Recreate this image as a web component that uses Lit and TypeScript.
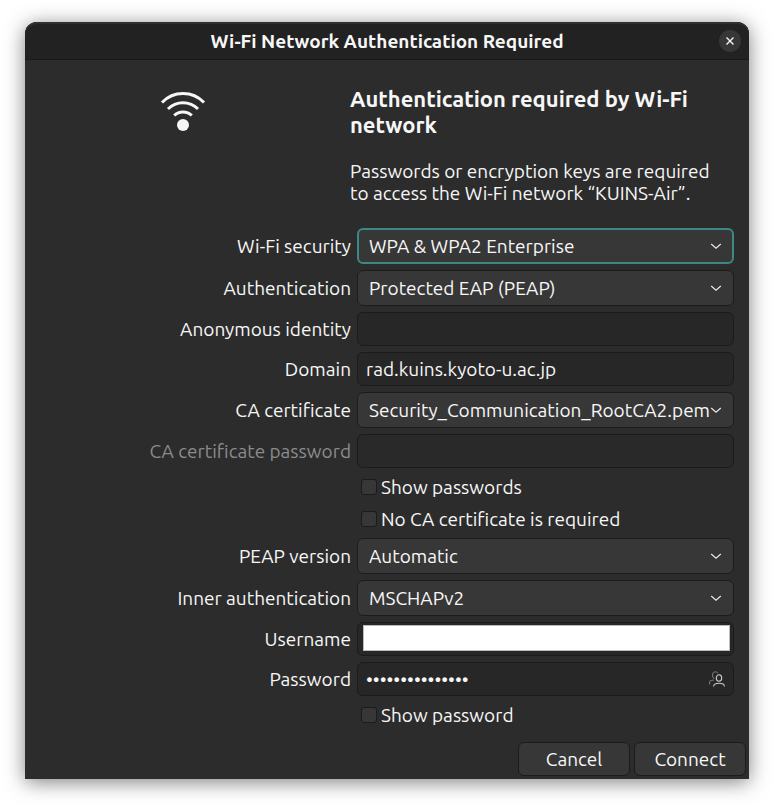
import { LitElement, html, css, svg } from "lit";
import { customElement, state } from "lit/decorators.js";

const wifiIcon = svg`
  <svg class="wifi" viewBox="0 0 48 42" width="48" height="42" role="img" aria-label="Wi-Fi">
    <g fill="none" stroke="#f7f7f7" stroke-width="3">
      <path d="M3 12.500 A29 29 0 0 1 45 12.500" />
      <path d="M9 19 A21 21 0 0 1 39 19" />
      <path d="M15.200 25.500 A12.500 12.500 0 0 1 32.800 25.500" />
    </g>
    <circle cx="24" cy="35" r="6" fill="#f7f7f7" />
  </svg>`;

const chevron = svg`
  <svg class="chevron" viewBox="0 0 12 8" width="12" height="8" aria-hidden="true">
    <path d="M1.200 2 L6 6.200 L10.800 2" fill="none" stroke="#eee" stroke-width="1.100" />
  </svg>`;

const usersIcon = svg`
  <svg viewBox="0 0 16 16" width="16" height="16" aria-hidden="true">
    <g fill="none" stroke-width="1.100">
      <path d="M5.500 7.500 A3 3.500 0 1 1 8.800 2" stroke="#777" />
      <path d="M0.600 13.500 V11.500 Q0.600 9 5 9" stroke="#777" />
      <ellipse cx="10" cy="7" rx="2.700" ry="3.200" stroke="#ccc" />
      <path d="M4.600 15.500 Q4.600 12.200 10 12.200 Q15.400 12.200 15.400 15.500" stroke="#ccc" />
    </g>
  </svg>`;

@customElement("app-root")
export class AppRoot extends LitElement {
  @state() private showPassword = false;

  static styles = css`
    :host {
      display: block;
      box-sizing: border-box;
      min-height: 100vh;
      padding: 22px 25px 28px;
      background: #fff;
      color: #f7f7f7;
      font: 19px/22px "Ubuntu", "Noto Sans", sans-serif;
    }
    * { box-sizing: border-box; }
    .window {
      background: #2c2c2c;
      border-radius: 12px 12px 0 0;
      box-shadow: 0 3px 20px rgba(0, 0, 0, 0.5);
      padding-bottom: 3px;
    }
    .titlebar {
      display: grid;
      grid-template-columns: 1fr auto 1fr;
      align-items: center;
      height: 38px;
      padding: 0 8px;
      background: #222;
      box-shadow: inset 0 2px #303030;
      border-bottom: 1px solid #191919;
      border-radius: 12px 12px 0 0;
    }
    .titlebar h1 {
      grid-column: 2;
      margin: 0;
      font-size: 19px;
      line-height: 22px;
      font-weight: 700;
    }
    .close {
      justify-self: end;
      display: grid;
      place-items: center;
      width: 22px;
      height: 22px;
      padding: 0;
      border: 0;
      border-radius: 50%;
      background: #373737;
    }
    .intro {
      display: grid;
      grid-template-columns: minmax(0, 316fr) minmax(0, 384fr);
      column-gap: 9px;
      padding: 26px 15px 24px 0;
    }
    .wifi { justify-self: center; margin-top: 4px; }
    .intro h2 {
      margin: 0 0 22px;
      font-size: 22px;
      line-height: 26px;
      font-weight: 700;
    }
    .intro p { margin: 0; }
    form { margin: 0; }
    .fields {
      display: grid;
      grid-template-columns: minmax(0, 326fr) minmax(0, 377fr);
      gap: 6px;
      align-items: center;
      padding-right: 15px;
    }
    .name { justify-self: end; white-space: nowrap; }
    .name.dim { color: #8b8b8b; }
    .picker { position: relative; display: grid; }
    select, .entry, .button {
      font: inherit;
      color: inherit;
      border: 1px solid #1b1b1b;
      border-radius: 6px;
    }
    select {
      appearance: none;
      width: 100%;
      height: 36px;
      padding: 0 20px 0 11px;
      background: #373737;
    }
    .focused select { border: 2px solid #3a8985; padding-left: 10px; outline: 0; }
    .chevron { position: absolute; right: 12px; top: 14px; pointer-events: none; }
    .entry {
      width: 100%;
      height: 34px;
      padding: 0 8px;
      background: #272727;
      outline: 0;
    }
    .entry:disabled { background: #292929; }
    .framed { display: flex; padding: 2px 3px 4px 5px; }
    .framed input {
      width: 100%;
      padding: 0 4px;
      border: 1px solid #bbb;
      background: #fff;
      color: #222;
      font: inherit;
      outline: 0;
    }
    .secret { display: flex; align-items: center; padding: 0 8px; }
    .secret input {
      flex: 1;
      min-width: 0;
      padding: 0;
      border: 0;
      outline: 0;
      background: none;
      color: inherit;
      font: inherit;
    }
    .peek { display: grid; padding: 0; border: 0; background: none; }
    .check {
      grid-column: 2;
      display: flex;
      align-items: center;
      gap: 4px;
      height: 26px;
      padding-left: 4px;
    }
    .check input {
      appearance: none;
      width: 16px;
      height: 16px;
      margin: 0;
      border: 1px solid #1b1b1b;
      border-radius: 3px;
      background: #373737;
    }
    .check input:checked { background: #3a8985; }
    .actions {
      display: flex;
      justify-content: flex-end;
      gap: 4px;
      padding: 14px 3px 0;
    }
    .button { width: 112px; height: 34px; padding: 0; background: #373737; }
  `;

  private picker(id: string, label: string, value: string, focused = false) {
    return html`
      <label class="name" for=${id}>${label}</label>
      <div class="picker ${focused ? "focused" : ""}">
        <select id=${id}><option>${value}</option></select>
        ${chevron}
      </div>`;
  }

  private check(label: string, onChange?: (e: Event) => void) {
    return html`<label class="check"><input type="checkbox" @change=${onChange} />${label}</label>`;
  }

  private togglePassword = () => {
    this.showPassword = !this.showPassword;
  };

  render() {
    return html`
      <main class="window">
        <header class="titlebar">
          <h1>Wi-Fi Network Authentication Required</h1>
          <button class="close" type="button" aria-label="Close">
            <svg viewBox="0 0 10 10" width="10" height="10" aria-hidden="true">
              <path d="M1.500 1.500 L8.500 8.500 M8.500 1.500 L1.500 8.500" stroke="#f7f7f7" stroke-width="1.400" />
            </svg>
          </button>
        </header>
        <section class="intro">
          ${wifiIcon}
          <div>
            <h2>Authentication required by Wi-Fi<br />network</h2>
            <p>Passwords or encryption keys are required<br />to access the Wi-Fi network “KUINS-Air”.</p>
          </div>
        </section>
        <form @submit=${(e: Event) => e.preventDefault()}>
          <div class="fields">
            ${this.picker("security", "Wi-Fi security", "WPA & WPA2 Enterprise", true)}
            ${this.picker("auth", "Authentication", "Protected EAP (PEAP)")}
            <label class="name" for="anonymous">Anonymous identity</label>
            <input class="entry" id="anonymous" type="text" />
            <label class="name" for="domain">Domain</label>
            <input class="entry" id="domain" type="text" value="rad.kuins.kyoto-u.ac.jp" />
            ${this.picker("ca", "CA certificate", "Security_Communication_RootCA2.pem")}
            <label class="name dim" for="capass">CA certificate password</label>
            <input class="entry" id="capass" type="password" disabled />
            ${this.check("Show passwords")}
            ${this.check("No CA certificate is required")}
            ${this.picker("peap", "PEAP version", "Automatic")}
            ${this.picker("inner", "Inner authentication", "MSCHAPv2")}
            <label class="name" for="username">Username</label>
            <div class="entry framed"><input id="username" type="text" /></div>
            <label class="name" for="password">Password</label>
            <div class="entry secret">
              <input id="password" type=${this.showPassword ? "text" : "password"} value="xxxxxxxxxxxxxxx" />
              <button class="peek" type="button" aria-label="Password storage">${usersIcon}</button>
            </div>
            ${this.check("Show password", this.togglePassword)}
          </div>
          <div class="actions">
            <button class="button" type="button">Cancel</button>
            <button class="button" type="submit">Connect</button>
          </div>
        </form>
      </main>`;
  }
}
